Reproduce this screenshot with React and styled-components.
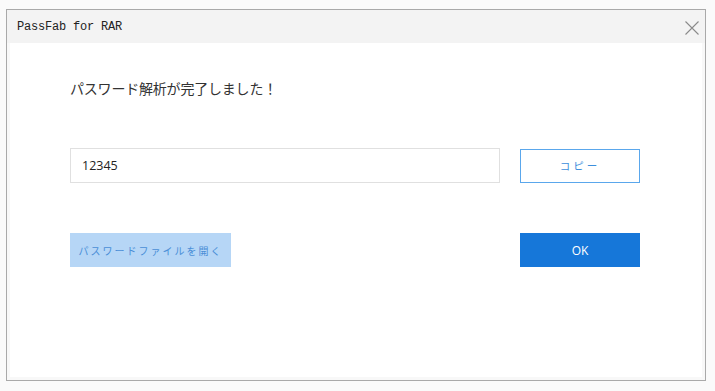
import React from "react";
import styled, { createGlobalStyle } from "styled-components";

const GlobalStyle = createGlobalStyle`
  html, body {
    margin: 0;
    padding: 0;
    background: #fafafa;
  }
  * {
    box-sizing: border-box;
  }
`;

function App() {
  return (
    <>
      <GlobalStyle />
      <Page>
        <Window>
          <TitleBar>
            <Title>PassFab for RAR</Title>
            <CloseButton aria-label="close">
              <svg width="14" height="14" viewBox="0 0 14 14">
                <path d="M0.5 0.5 L13.5 13.5 M13.5 0.5 L0.5 13.5" stroke="#8a8a8a" strokeWidth="1.1" fill="none" />
              </svg>
            </CloseButton>
          </TitleBar>
          <Content>
            <Message>パスワード解析が完了しました！</Message>
            <Row>
              <PasswordField value="12345" readOnly />
              <OutlineButton>コピー</OutlineButton>
            </Row>
            <Row $top={50}>
              <OpenButton>パスワードファイルを開く</OpenButton>
              <PrimaryButton>OK</PrimaryButton>
            </Row>
          </Content>
        </Window>
      </Page>
    </>
  );
}

export default App;

const Page = styled.div`
  width: 715px;
  height: 391px;
  padding: 9px 0 0 6px;
`;

const Window = styled.div`
  width: 700px;
  height: 372px;
  border: 1px solid #a9a9a9;
  background: #f8f8f8;
  display: flex;
  flex-direction: column;
`;

const TitleBar = styled.div`
  height: 33px;
  display: flex;
  align-items: center;
  justify-content: space-between;
  padding: 0 6px 0 10px;
  background: #f3f3f3;
`;

const Title = styled.div`
  font-family: "Liberation Mono", "Noto Sans CJK JP", monospace;
  font-size: 12px;
  color: #222;
  letter-spacing: -0.2px;
`;

const CloseButton = styled.div`
  width: 14px;
  height: 14px;
  display: flex;
  margin-top: 2px;
`;

const Content = styled.div`
  flex: 1;
  margin: 0 3px 3px 3px;
  background: #ffffff;
  padding: 35px 0 0 60px;
  display: flex;
  flex-direction: column;
`;

const Message = styled.div`
  font-family: "Noto Sans CJK JP", sans-serif;
  font-size: 14px;
  line-height: 20px;
  color: #333;
  letter-spacing: -0.2px;
`;

const Row = styled.div`
  display: grid;
  grid-template-columns: 430px 120px;
  column-gap: 20px;
  align-items: center;
  margin-top: ${(p) => p.$top ?? 50}px;
`;

const PasswordField = styled.input`
  height: 35px;
  width: 430px;
  border: 1px solid #e0e0e0;
  padding: 0 11px;
  font-family: "Open Sans", "Noto Sans", sans-serif;
  font-size: 12.5px;
  color: #222;
  outline: none;
`;

const ButtonBase = styled.div`
  height: 34px;
  display: flex;
  align-items: center;
  justify-content: center;
  font-family: "Noto Sans CJK JP", sans-serif;
  font-size: 10.5px;
`;

const OutlineButton = styled(ButtonBase)`
  border: 1.5px solid #5aa7ec;
  color: #3d8fdc;
  letter-spacing: 3px;
  background: #fff;
`;

const OpenButton = styled(ButtonBase)`
  width: 161px;
  background: #b6d6f6;
  color: #4a8ed6;
  font-size: 10px;
  letter-spacing: 2px;
`;

const PrimaryButton = styled(ButtonBase)`
  background: #1677d9;
  color: #fff;
  font-family: "Open Sans", sans-serif;
  font-size: 12px;
`;
